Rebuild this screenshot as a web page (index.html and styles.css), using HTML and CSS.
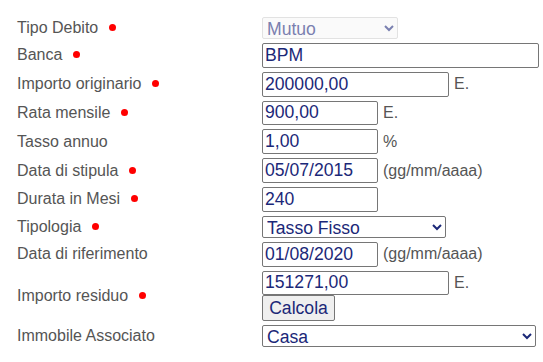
FILE: index.html
```html
<!DOCTYPE html>
<html lang="it">
<head>
  <meta charset="UTF-8">
  <title>Debito</title>
  <link rel="stylesheet" href="styles.css">
</head>
<body>
  <table class="form">
    <tr>
      <td class="label">Tipo Debito <span class="req"></span></td>
      <td>
        <div class="field">
          <select class="sel sel-tipo" disabled>
            <option>Mutuo</option>
          </select>
        </div>
      </td>
    </tr>
    <tr>
      <td class="label">Banca <span class="req"></span></td>
      <td><div class="field"><input class="inp inp-xl" type="text" value="BPM"></div></td>
    </tr>
    <tr>
      <td class="label">Importo originario <span class="req"></span></td>
      <td><div class="field"><input class="inp inp-md" type="text" value="200000,00"><span class="unit">E.</span></div></td>
    </tr>
    <tr>
      <td class="label">Rata mensile <span class="req"></span></td>
      <td><div class="field"><input class="inp inp-sm" type="text" value="900,00"><span class="unit">E.</span></div></td>
    </tr>
    <tr>
      <td class="label">Tasso annuo</td>
      <td><div class="field"><input class="inp inp-sm" type="text" value="1,00"><span class="unit">%</span></div></td>
    </tr>
    <tr>
      <td class="label">Data di stipula <span class="req"></span></td>
      <td><div class="field"><input class="inp inp-sm" type="text" value="05/07/2015"><span class="unit">(gg/mm/aaaa)</span></div></td>
    </tr>
    <tr>
      <td class="label">Durata in Mesi <span class="req"></span></td>
      <td><div class="field"><input class="inp inp-sm" type="text" value="240"></div></td>
    </tr>
    <tr>
      <td class="label">Tipologia <span class="req"></span></td>
      <td>
        <div class="field">
          <select class="sel sel-tipologia">
            <option>Tasso Fisso</option>
            <option>Tasso Variabile</option>
          </select>
        </div>
      </td>
    </tr>
    <tr>
      <td class="label">Data di riferimento</td>
      <td><div class="field"><input class="inp inp-sm" type="text" value="01/08/2020"><span class="unit">(gg/mm/aaaa)</span></div></td>
    </tr>
    <tr>
      <td class="label">Importo residuo <span class="req"></span></td>
      <td>
        <div class="field"><input class="inp inp-md" type="text" value="151271,00"><span class="unit">E.</span></div>
        <div class="field"><button class="btn" type="button">Calcola</button></div>
      </td>
    </tr>
    <tr>
      <td class="label">Immobile Associato</td>
      <td>
        <div class="field">
          <select class="sel sel-immobile">
            <option>Casa</option>
          </select>
        </div>
      </td>
    </tr>
  </table>
</body>
</html>
```

FILE: styles.css
```css
body {
  margin: 0;
  background: #fff;
  font-family: "Liberation Sans", Arial, sans-serif;
  color: #555;
}

/* tabella del modulo */
.form {
  border-collapse: collapse;
  margin: 15px 0 0 17px;
}

.form td {
  padding: 2px 0;
  vertical-align: middle;
}

.label {
  width: 245px;
  font-size: 16px;
  color: #555;
  white-space: nowrap;
}

.req {
  display: inline-block;
  width: 7px;
  height: 7px;
  margin-left: 6px;
  border-radius: 50%;
  background: #f00;
  vertical-align: 2px;
}

.field {
  display: flex;
  align-items: center;
  gap: 5px;
}

.unit {
  font-size: 16px;
  color: #555;
}

/* controlli */
.inp,
.sel,
.btn {
  box-sizing: border-box;
  font-family: "Liberation Sans", Arial, sans-serif;
  font-size: 17.6px;
  color: #1b2878;
  margin: 0;
}

.inp {
  height: 24.8px;
  padding: 0 2px;
  border: 1px solid #767676;
  border-radius: 2px;
  background: #fff;
}

.inp-xl { width: 277px; }
.inp-md { width: 187px; }
.inp-sm { width: 116px; }

.sel {
  height: 22px;
  padding: 0;
  border: 1px solid #767676;
  border-radius: 2px;
  background: #fff;
}

.sel-tipo { width: 136px; }
.sel-tipologia { width: 184px; }
.sel-immobile { width: 274px; }

.sel:disabled {
  color: #7a80b0;
  border-color: #e2e2e2;
  background: #fafafa;
  opacity: 1;
}

.btn {
  width: 73px;
  height: 26px;
  padding: 0 6px;
  border: 1px solid #767676;
  border-radius: 2px;
  background: #efefef;
}
```
